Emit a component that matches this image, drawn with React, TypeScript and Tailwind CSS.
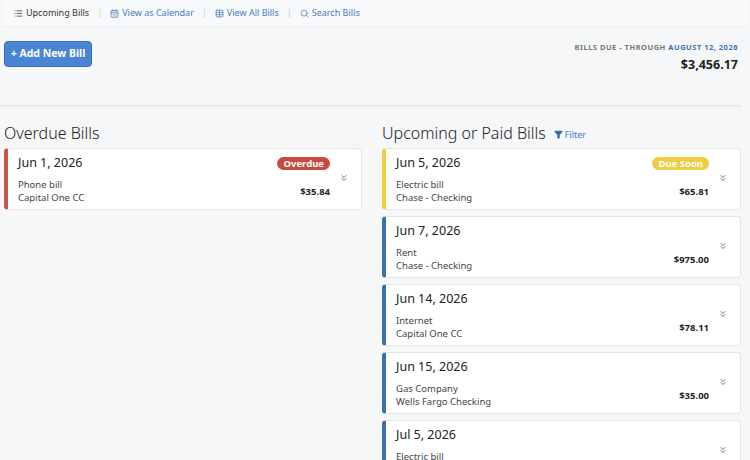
import React from "react";
import { List, CalendarDays, Table, Search, Filter, ChevronsDown } from "lucide-react";

type Bill = { date: string; name: string; account: string; amount: string; color: string; badge?: { text: string; cls: string } };

const upcoming: Bill[] = [
  { date: "Jun 5, 2026", name: "Electric bill", account: "Chase - Checking", amount: "$65.81", color: "border-l-[#f0cc3f]", badge: { text: "Due Soon", cls: "bg-[#f0cc3f]" } },
  { date: "Jun 7, 2026", name: "Rent", account: "Chase - Checking", amount: "$975.00", color: "border-l-[#3a6fb0]" },
  { date: "Jun 14, 2026", name: "Internet", account: "Capital One CC", amount: "$78.11", color: "border-l-[#3a6fb0]" },
  { date: "Jun 15, 2026", name: "Gas Company", account: "Wells Fargo Checking", amount: "$35.00", color: "border-l-[#3a6fb0]" },
  { date: "Jul 5, 2026", name: "Electric bill", account: "Chase - Checking", amount: "$65.81", color: "border-l-[#3a6fb0]" },
];

const BillCard = ({ bill }: { bill: Bill }) => (
  <div className={`h-[62px] bg-white rounded border border-[#e3e5e8] border-l-4 ${bill.color} flex items-stretch pl-[10px] pr-[12px]`}>
    <div className="flex-1 flex flex-col pt-[6px]">
      <div className="flex justify-between items-center h-[16px]">
        <span className="text-[12.5px] text-[#222]">{bill.date}</span>
        {bill.badge && (
          <span className={`${bill.badge.cls} text-white font-bold text-[9.5px] rounded-full px-[6px] leading-[13px] mr-[9px]`}>{bill.badge.text}</span>
        )}
      </div>
      <div className="flex justify-between items-center mt-[7px]">
        <div className="text-[9.5px] text-[#444] leading-[13px]">
          <div>{bill.name}</div>
          <div>{bill.account}</div>
        </div>
        <span className="text-[9.5px] font-bold text-[#222] mr-[9px] mt-[2px]">{bill.amount}</span>
      </div>
    </div>
    <div className="flex items-center pb-[2px]">
      <ChevronsDown size={10} strokeWidth={2} className="text-[#555]" />
    </div>
  </div>
);

export default function App() {
  return (
    <div className="w-[750px] h-[460px] overflow-hidden bg-[#f6f7f9] font-['Liberation_Sans']">
      <div className="h-[27px] mx-[3px] bg-[#f8f9fb] border-b border-[#eceef1] flex items-center pl-[11px] text-[9px] gap-[8px]">
        <span className="flex items-center gap-[3px] text-[#333]"><List size={9} />Upcoming Bills</span>
        <span className="text-[#ccc]">|</span>
        <span className="flex items-center gap-[3px] text-[#4a7cc4]"><CalendarDays size={9} />View as Calendar</span>
        <span className="text-[#ccc]">|</span>
        <span className="flex items-center gap-[3px] text-[#4a7cc4]"><Table size={9} />View All Bills</span>
        <span className="text-[#ccc]">|</span>
        <span className="flex items-center gap-[3px] text-[#4a7cc4]"><Search size={9} />Search Bills</span>
      </div>
      <div className="flex justify-between items-start px-[4px] pt-[14px] pb-[10px] border-b-2 border-[#e8eaed] mr-[8px] h-[80px] box-border">
        <button className="w-[88px] h-[26px] bg-[#4a84d4] border border-[#3b70b8] rounded text-white text-[10.5px] font-bold">+ Add New Bill</button>
        <div className="text-right pt-[1px]">
          <div className="text-[7.5px] font-bold tracking-[0.5px] text-[#777]">BILLS DUE - THROUGH <span className="text-[#3f72b8]">AUGUST 12, 2026</span></div>
          <div className="text-[12.5px] font-bold text-[#222] mt-[3px]">$3,456.17</div>
        </div>
      </div>
      <div className="flex gap-[20px] px-[4px] pr-[9px] pt-[15px]">
        <div className="w-[358px]">
          <h2 className="text-[16px] font-light font-['Lato'] text-[#222] h-[22px] leading-[22px] mb-[4px]">Overdue Bills</h2>
          <BillCard bill={{ date: "Jun 1, 2026", name: "Phone bill", account: "Capital One CC", amount: "$35.84", color: "border-l-[#d0534a]", badge: { text: "Overdue", cls: "bg-[#c84a40]" } }} />
        </div>
        <div className="flex-1">
          <h2 className="text-[16px] font-light font-['Lato'] text-[#222] h-[22px] leading-[22px] mb-[4px] flex items-center gap-[8px]">
            Upcoming or Paid Bills
            <span className="flex items-center gap-[2px] text-[9px] font-normal text-[#4a7cc4] font-['Liberation_Sans'] mt-[3px]"><Filter size={9} fill="#2f65b0" className="text-[#2f65b0]" />Filter</span>
          </h2>
          <div className="flex flex-col gap-[6px]">
            {upcoming.map((b, i) => <BillCard key={i} bill={b} />)}
          </div>
        </div>
      </div>
    </div>
  );
}
